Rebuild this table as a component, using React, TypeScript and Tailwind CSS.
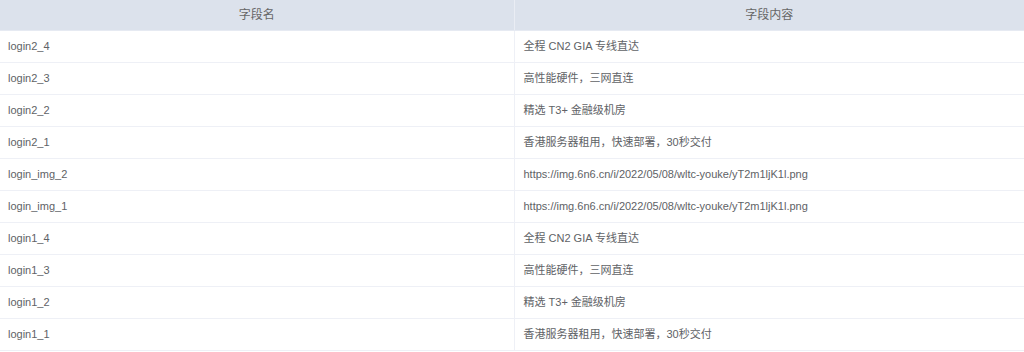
import React from 'react';

const ROWS: [string, string][] = [
  ['login2_4', '全程 CN2 GIA 专线直达'],
  ['login2_3', '高性能硬件，三网直连'],
  ['login2_2', '精选 T3+ 金融级机房'],
  ['login2_1', '香港服务器租用，快速部署，30秒交付'],
  ['login_img_2', 'https://img.6n6.cn/i/2022/05/08/wltc-youke/yT2m1ljK1l.png'],
  ['login_img_1', 'https://img.6n6.cn/i/2022/05/08/wltc-youke/yT2m1ljK1l.png'],
  ['login1_4', '全程 CN2 GIA 专线直达'],
  ['login1_3', '高性能硬件，三网直连'],
  ['login1_2', '精选 T3+ 金融级机房'],
  ['login1_1', '香港服务器租用，快速部署，30秒交付'],
];

const App: React.FC = () => {
  return (
    <div className="w-[1024px] h-[352px] bg-white overflow-hidden font-['Liberation_Sans','Noto_Sans_CJK_SC',sans-serif] text-[11px] text-[#606266]">
      <table className="w-full table-fixed border-collapse">
        <colgroup>
          <col className="w-[514px]" />
          <col />
        </colgroup>
        <thead>
          <tr className="h-[30px] bg-[#dce2ec] text-[12px] text-[#666]">
            <th className="font-normal text-center border-r border-[#eaedf4] border-b border-b-[#e6eaf2]">字段名</th>
            <th className="font-normal text-center border-b border-b-[#e6eaf2]">字段内容</th>
          </tr>
        </thead>
        <tbody>
          {ROWS.map(([name, value], i) => (
            <tr key={i} className="h-[32px] border-b border-[#eef0f6]">
              <td className="px-2 border-r border-[#eef0f6]">{name}</td>
              <td className="pl-[9px] pr-2">{value}</td>
            </tr>
          ))}
        </tbody>
      </table>
    </div>
  );
};

export default App;
